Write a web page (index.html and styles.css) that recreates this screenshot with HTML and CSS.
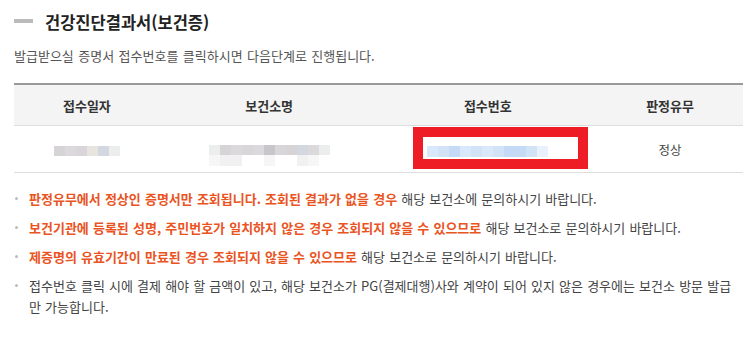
FILE: index.html
```html
<!DOCTYPE html>
<html lang="ko">
  <head>
    <meta charset="utf-8">
    <title>건강진단결과서(보건증)</title>
    <link rel="stylesheet" href="styles.css">
  </head>

  <body>
    <div class="Wrap">
      <!-- 제목 -->
      <h2 class="Title">건강진단결과서(보건증)</h2>
      <p class="Desc">발급받으실 증명서 접수번호를 클릭하시면 다음단계로 진행됩니다.</p>

      <!-- 결과 목록 -->
      <table class="List">
        <thead>
          <tr>
            <th class="colDate">접수일자</th>
            <th class="colName">보건소명</th>
            <th class="colNo">접수번호</th>
            <th class="colRes">판정유무</th>
          </tr>
        </thead>
        <tbody>
          <tr>
            <td>
              <span class="blur">
                <i class="g1"></i><i class="g2"></i><i class="g3"></i><i class="g4"></i><i class="g5"></i><i class="g6"></i>
              </span>
            </td>
            <td>
              <span class="blur blurName">
                <span class="blurRow">
                  <i class="g6"></i><i class="g1"></i><i class="g2"></i><i class="g3"></i><i class="g2"></i><i class="g7"></i><i class="g3"></i><i class="g1"></i><i class="g5"></i><i class="g2"></i><i class="g6"></i>
                </span>
                <span class="blurRow light">
                  <i class="w1"></i><i class="w2"></i><i class="w2"></i><i class="w0"></i><i class="w0"></i><i class="w1"></i><i class="w0"></i><i class="w0"></i><i class="w2"></i><i class="w1"></i><i class="w0"></i>
                </span>
              </span>
            </td>
            <td class="noCell">
              <a href="#" class="blur blurNo">
                <i class="b1"></i><i class="b2"></i><i class="b3"></i><i class="b1"></i><i class="b2"></i><i class="b1"></i><i class="b2"></i><i class="b3"></i><i class="b3"></i><i class="b2"></i><i class="b4"></i>
              </a>
              <span class="mark"></span>
            </td>
            <td>정상</td>
          </tr>
        </tbody>
      </table>

      <!-- 안내 -->
      <ul class="Notes">
        <li><strong>판정유무에서 정상인 증명서만 조회됩니다. 조회된 결과가 없을 경우</strong> 해당 보건소에 문의하시기 바랍니다.</li>
        <li><strong>보건기관에 등록된 성명, 주민번호가 일치하지 않은 경우 조회되지 않을 수 있으므로</strong> 해당 보건소로 문의하시기 바랍니다.</li>
        <li><strong>제증명의 유효기간이 만료된 경우 조회되지 않을 수 있으므로</strong> 해당 보건소로 문의하시기 바랍니다.</li>
        <li>접수번호 클릭 시에 결제 해야 할 금액이 있고, 해당 보건소가 PG(결제대행)사와 계약이 되어 있지 않은 경우에는 보건소 방문 발급만 가능합니다.</li>
      </ul>
    </div>
  </body>
</html>
```

FILE: styles.css
```css
body {
  margin: 0;
  background: #fff;
  font-family: "Noto Sans CJK KR", "Noto Sans", sans-serif;
  color: #333;
}

.Wrap {
  padding: 10px 11px 0 14px;
}

.Title {
  display: flex;
  align-items: center;
  gap: 12px;
  margin: 0;
  height: 24px;
  font-size: 16.5px;
  font-weight: 700;
  color: #222;
}

.Title::before {
  content: "";
  width: 19px;
  height: 4px;
  margin-top: -2px;
  background: #bbb;
}

.Desc {
  margin: 12px 0 0;
  font-size: 13px;
  line-height: 20px;
  word-spacing: 0.8px;
  color: #555;
}

.List {
  width: 729px;
  margin-top: 17px;
  border-collapse: collapse;
  border-top: 2px solid #999;
  table-layout: fixed;
}

.List th {
  height: 40px;
  padding: 0;
  background: #f4f4f4;
  border-bottom: 1px solid #ddd;
  font-size: 13px;
  font-weight: 700;
  color: #333;
}

.List td {
  height: 46px;
  padding: 0;
  border-bottom: 1px solid #ddd;
  text-align: center;
  font-size: 12.5px;
  color: #444;
}

.colDate,
.colRes {
  width: 20%;
}

.colName,
.colNo {
  width: 30%;
}

/* 가려진 개인정보 */
.blur {
  display: inline-flex;
  vertical-align: middle;
}

.blur i {
  display: block;
  width: 11px;
  height: 10px;
}

.blurName {
  flex-direction: column;
  margin-top: 12px;
}

.blurRow {
  display: flex;
}

.blurRow.light i {
  height: 11px;
}

.blurNo i {
  height: 11px;
}

.g1 { background: #d6d4d6; }
.g2 { background: #dbd9db; }
.g3 { background: #d8d6d8; }
.g4 { background: #e8e5e1; }
.g5 { background: #d3d8e0; }
.g6 { background: #eceeee; }
.g7 { background: #c9c6cb; }
.w0 { background: #fff; }
.w1 { background: #f6f6f6; }
.w2 { background: #f1f1f1; }
.b1 { background: #d9e8fa; }
.b2 { background: #d2e3f8; }
.b3 { background: #c4daf6; }
.b4 { background: #e9f2fc; }

.noCell {
  position: relative;
}

.mark {
  position: absolute;
  left: 35px;
  top: 1px;
  width: 155px;
  height: 22px;
  border: 10px solid #ee1c25;
}

.Notes {
  list-style: none;
  margin: 15px 3px 0 0;
  padding: 0;
}

.Notes li {
  position: relative;
  padding-left: 15px;
  margin-bottom: 8px;
  font-size: 13px;
  line-height: 21px;
  word-spacing: 0.5px;
  color: #444;
}

.Notes li::before {
  content: "";
  position: absolute;
  left: 1px;
  top: 9px;
  width: 3px;
  height: 3px;
  border-radius: 50%;
  background: #bbb;
}

.Notes strong {
  color: #e9541f;
}
```
